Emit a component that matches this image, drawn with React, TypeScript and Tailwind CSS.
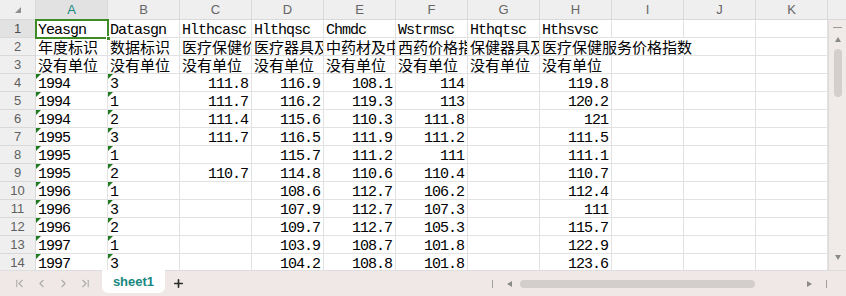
import * as React from "react";
import { ChevronFirst, ChevronLast, ChevronLeft, ChevronRight, Plus } from "lucide-react";

const COLS = ["A", "B", "C", "D", "E", "F", "G", "H", "I", "J", "K"];

const HEAD = ["Yeasgn", "Datasgn", "Hlthcasc", "Hlthqsc", "Chmdc", "Wstrmsc", "Hthqtsc", "Hthsvsc"];
const NAMES = [
  "年度标识",
  "数据标识",
  "医疗保健价格指数",
  "医疗器具及用品价格指数",
  "中药材及中成药价格指数",
  "西药价格指数",
  "保健器具及用品价格指数",
  "医疗保健服务价格指数",
];
const UNITS = Array(8).fill("没有单位");

// year, data flag, then C..H
const DATA: string[][] = [
  ["1994", "3", "111.8", "116.9", "108.1", "114", "", "119.8"],
  ["1994", "1", "111.7", "116.2", "119.3", "113", "", "120.2"],
  ["1994", "2", "111.4", "115.6", "110.3", "111.8", "", "121"],
  ["1995", "3", "111.7", "116.5", "111.9", "111.2", "", "111.5"],
  ["1995", "1", "", "115.7", "111.2", "111", "", "111.1"],
  ["1995", "2", "110.7", "114.8", "110.6", "110.4", "", "110.7"],
  ["1996", "1", "", "108.6", "112.7", "106.2", "", "112.4"],
  ["1996", "3", "", "107.9", "112.7", "107.3", "", "111"],
  ["1996", "2", "", "109.7", "112.7", "105.3", "", "115.7"],
  ["1997", "1", "", "103.9", "108.7", "101.8", "", "122.9"],
  ["1997", "3", "", "104.2", "108.8", "101.8", "", "123.6"],
];

const cjk = "font-['Noto_Sans_CJK_SC',sans-serif] text-[15px] leading-[18px]";
const mono = "font-['Liberation_Mono',monospace] text-[15px] leading-[18px] tracking-[-1px] pt-[2px]";

function Cell({ children, right, flag, span }: { children?: string; right?: boolean; flag?: boolean; span?: boolean }) {
  const isCjk = !!children && /[\u4e00-\u9fff]/.test(children);
  return (
    <div
      className={`relative h-[18px] border-r border-b border-[#e2e2e2] overflow-hidden whitespace-nowrap text-black ${
        span ? "col-span-3" : ""
      } ${right ? "text-right pr-[3px]" : "pl-[2px]"} ${isCjk ? cjk : mono}`}
    >
      {flag && (
        <div className="absolute left-0 top-0 w-0 h-0 border-t-[5px] border-t-[#1f7a1f] border-r-[5px] border-r-transparent" />
      )}
      {children}
    </div>
  );
}

function RowHead({ n, active }: { n: number; active?: boolean }) {
  return (
    <div
      className={`h-[18px] border-r border-b border-[#d9d9d9] flex items-center justify-center font-['Liberation_Sans',sans-serif] text-[13px] ${
        active ? "bg-[#e2e2e2] text-[#4d4d4d]" : "bg-[#efefef] text-[#5f5f5f]"
      }`}
    >
      {n}
    </div>
  );
}

function Tri({ dir }: { dir: "up" | "down" | "left" | "right" }) {
  const cls = {
    up: "border-x-[3px] border-x-transparent border-b-[5px] border-b-[#8a8a8a]",
    down: "border-x-[3px] border-x-transparent border-t-[5px] border-t-[#8a8a8a]",
    left: "border-y-[3px] border-y-transparent border-r-[5px] border-r-[#8a8a8a]",
    right: "border-y-[3px] border-y-transparent border-l-[5px] border-l-[#8a8a8a]",
  }[dir];
  return <div className={`w-0 h-0 ${cls}`} />;
}

export default function App() {
  const empties = (k: number) => Array.from({ length: k }, (_, i) => <Cell key={`e${i}`} />);

  return (
    <div className="w-[846px] h-[296px] overflow-hidden bg-white flex flex-col">
      <div className="flex h-[270px] overflow-hidden">
        <div className="relative w-[828px] overflow-hidden">
          <div className="grid grid-cols-[36px_repeat(11,72px)] grid-rows-[20px_repeat(14,18px)]">
            {/* corner */}
            <div className="bg-[#efefef] border-r border-b border-[#d9d9d9] flex items-center justify-center">
              <div className="w-0 h-0 border-l-[6px] border-l-transparent border-b-[6px] border-b-[#8f8f8f] ml-[1px] mt-[1px]" />
            </div>
            {COLS.map((c, i) => (
              <div
                key={c}
                className={`border-r border-b border-[#d9d9d9] flex items-center justify-center font-['Liberation_Sans',sans-serif] text-[13px] ${
                  i === 0 ? "bg-[#e2e2e2] text-[#17877f]" : "bg-[#efefef] text-[#666]"
                }`}
              >
                {c}
              </div>
            ))}

            <RowHead n={1} active />
            {HEAD.map((t) => (
              <Cell key={t}>{t}</Cell>
            ))}
            {empties(3)}

            <RowHead n={2} />
            {NAMES.map((t, i) => (
              <Cell key={t} span={i === 7}>
                {t}
              </Cell>
            ))}
            <Cell />

            <RowHead n={3} />
            {UNITS.map((t, i) => (
              <Cell key={i}>{t}</Cell>
            ))}
            {empties(3)}

            {DATA.map((r, ri) => (
              <React.Fragment key={ri}>
                <RowHead n={ri + 4} />
                {r.map((v, ci) =>
                  ci < 2 ? (
                    <Cell key={ci} flag>
                      {v}
                    </Cell>
                  ) : (
                    <Cell key={ci} right>
                      {v}
                    </Cell>
                  )
                )}
                {empties(3)}
              </React.Fragment>
            ))}
          </div>

          {/* selection on A1 */}
          <div className="absolute left-[35px] top-[19px] w-[74px] h-[20px] border-2 border-[#3d8a26]" />
          <div className="absolute left-[106px] top-[36px] w-[5px] h-[5px] bg-[#3d8a26] border border-white" />
        </div>

        {/* vertical scrollbar */}
        <div className="w-[18px] flex flex-col">
          <div className="h-[20px] bg-[#efefef] border-b border-[#d9d9d9]" />
          <div className="flex-1 bg-[#f0ebe9] border-l border-[#dcdcdc] flex flex-col items-center pt-[7px]">
            <div className="w-[9px] h-[1px] bg-[#9a9a9a]" />
            <div className="mt-[9px]">
              <Tri dir="up" />
            </div>
            <div className="mt-[7px] w-[8px] h-[48px] rounded-full bg-[#d4cfcd]" />
            <div className="mt-auto mb-[10px]">
              <Tri dir="down" />
            </div>
          </div>
        </div>
      </div>

      {/* sheet tabs */}
      <div className="h-[26px] bg-[#efe8e6] border-t border-[#dedede] flex items-start">
        <div className="w-[102px] h-full flex items-center text-[#ababab] pl-[13px] gap-[9px]">
          <ChevronFirst size={13} strokeWidth={2} />
          <ChevronLeft size={13} strokeWidth={2} />
          <ChevronRight size={13} strokeWidth={2} />
          <ChevronLast size={13} strokeWidth={2} />
        </div>
        <div className="w-[63px] h-[23px] -mt-px bg-white rounded-b-[6px] flex items-center justify-center font-['Liberation_Sans',sans-serif] font-bold text-[13px] text-[#17877f]">
          sheet1
        </div>
        <div className="h-full flex items-center ml-[7px] text-[#2a2a2a]">
          <Plus size={13} strokeWidth={3} />
        </div>
        <div className="ml-auto w-[354px] h-full flex items-center pr-[19px]">
          <div className="w-px h-[8px] bg-[#a0a0a0]" />
          <div className="ml-[14px]">
            <Tri dir="left" />
          </div>
          <div className="ml-[8px] w-[235px] h-[8px] rounded-full bg-[#d3cecc]" />
          <div className="ml-auto">
            <Tri dir="right" />
          </div>
          <div className="ml-[14px] w-px h-[8px] bg-[#a0a0a0]" />
        </div>
      </div>
    </div>
  );
}
